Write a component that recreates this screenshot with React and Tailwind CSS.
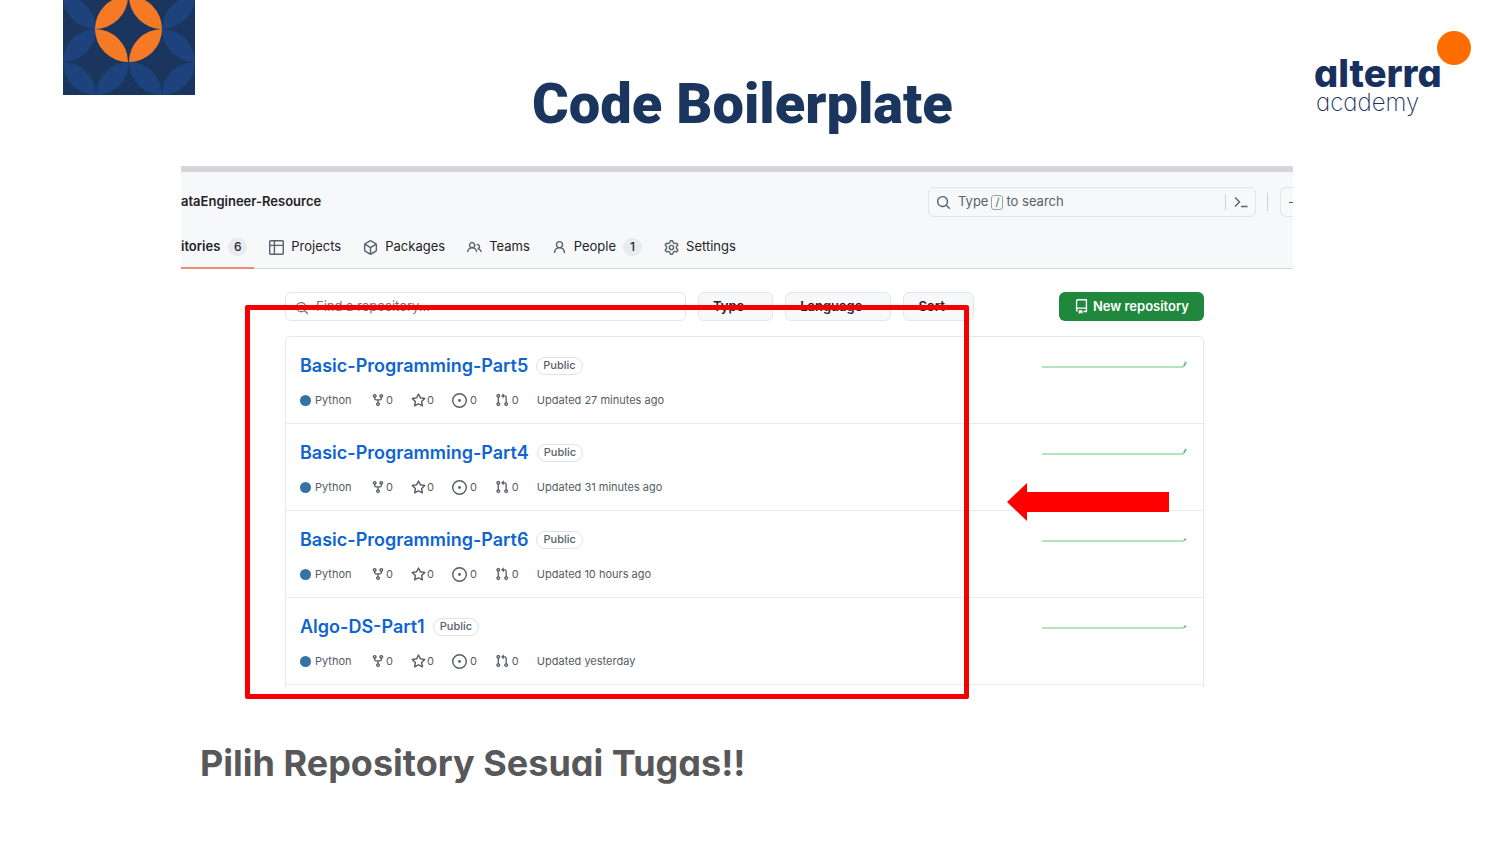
import React from "react";

const paths = {
  fork: "M5 5.372v.878c0 .414.336.75.75.75h4.5a.75.75 0 0 0 .75-.75v-.878a2.25 2.25 0 1 1 1.5 0v.878a2.25 2.25 0 0 1-2.25 2.25h-1.5v2.128a2.251 2.251 0 1 1-1.5 0V8.5h-1.5A2.25 2.25 0 0 1 3.5 6.25v-.878a2.25 2.25 0 1 1 1.5 0ZM5 3.25a.75.75 0 1 0-1.5 0 .75.75 0 0 0 1.5 0Zm6.75.75a.75.75 0 1 0 0-1.5.75.75 0 0 0 0 1.5Zm-3 8.75a.75.75 0 1 0-1.5 0 .75.75 0 0 0 1.5 0Z",
  star: "M8 .25a.75.75 0 0 1 .673.418l1.882 3.815 4.21.612a.75.75 0 0 1 .416 1.279l-3.046 2.97.719 4.192a.751.751 0 0 1-1.088.791L8 12.347l-3.766 1.98a.75.75 0 0 1-1.088-.79l.72-4.194L.818 6.374a.75.75 0 0 1 .416-1.28l4.21-.611L7.327.668A.75.75 0 0 1 8 .25Zm0 2.445L6.615 5.5a.75.75 0 0 1-.564.41l-3.097.45 2.24 2.184a.75.75 0 0 1 .216.664l-.528 3.084 2.769-1.456a.75.75 0 0 1 .698 0l2.77 1.456-.53-3.084a.75.75 0 0 1 .216-.664l2.24-2.183-3.096-.45a.75.75 0 0 1-.564-.41L8 2.694Z",
  issue: "M8 9.5a1.5 1.5 0 1 0 0-3 1.5 1.5 0 0 0 0 3ZM8 0a8 8 0 1 1 0 16A8 8 0 0 1 8 0ZM1.5 8a6.5 6.5 0 1 0 13 0 6.5 6.5 0 0 0-13 0Z",
  pull: "M1.5 3.25a2.25 2.25 0 1 1 3 2.122v5.256a2.251 2.251 0 1 1-1.5 0V5.372A2.25 2.25 0 0 1 1.5 3.25Zm5.677-.177L9.573.677A.25.25 0 0 1 10 .854V2.5h1A2.5 2.5 0 0 1 13.5 5v5.628a2.251 2.251 0 1 1-1.5 0V5a1 1 0 0 0-1-1h-1v1.646a.25.25 0 0 1-.427.177L7.177 3.427a.25.25 0 0 1 0-.354ZM3.75 2.5a.75.75 0 1 0 0 1.5.75.75 0 0 0 0-1.5Zm0 9.5a.75.75 0 1 0 0 1.5.75.75 0 0 0 0-1.5Zm8.25.75a.75.75 0 1 0 1.5 0 .75.75 0 0 0-1.5 0Z",
  table: "M0 1.75C0 .784.784 0 1.75 0h12.5C15.216 0 16 .784 16 1.75v12.5A1.75 1.75 0 0 1 14.25 16H1.75A1.75 1.75 0 0 1 0 14.25ZM6.5 6.5v8h7.75a.25.25 0 0 0 .25-.25V6.5Zm8-1.5V1.75a.25.25 0 0 0-.25-.25H6.5V5Zm-13 1.5v7.75c0 .138.112.25.25.25H5v-8ZM5 5V1.5H1.75a.25.25 0 0 0-.25.25V5Z",
  package: "m8.878.392 5.25 3.045c.54.314.872.89.872 1.514v6.098a1.75 1.75 0 0 1-.872 1.514l-5.25 3.045a1.75 1.75 0 0 1-1.756 0l-5.25-3.045A1.75 1.75 0 0 1 1 11.049V4.951c0-.624.332-1.201.872-1.514L7.122.392a1.75 1.75 0 0 1 1.756 0ZM7.875 1.69l-4.63 2.685L8 7.133l4.755-2.758-4.63-2.685a.248.248 0 0 0-.25 0ZM2.5 5.677v5.372c0 .09.047.171.125.216l4.625 2.683V8.432Zm6.25 8.271 4.625-2.683a.25.25 0 0 0 .125-.216V5.677L8.75 8.432Z",
  people: "M2 5.5a3.5 3.5 0 1 1 5.898 2.549 5.508 5.508 0 0 1 3.034 4.084.75.75 0 1 1-1.482.235 4 4 0 0 0-7.9 0 .75.75 0 0 1-1.482-.236A5.507 5.507 0 0 1 3.102 8.05 3.493 3.493 0 0 1 2 5.5ZM11 4a3.001 3.001 0 0 1 2.22 5.018 5.01 5.01 0 0 1 2.56 3.012.749.749 0 0 1-.885.954.752.752 0 0 1-.549-.514 3.507 3.507 0 0 0-2.522-2.372.75.75 0 0 1-.574-.73v-.352a.75.75 0 0 1 .416-.672A1.5 1.5 0 0 0 11 5.5.75.75 0 0 1 11 4Zm-5.5-.5a2 2 0 1 0-.001 3.999A2 2 0 0 0 5.5 3.5Z",
  person: "M10.561 8.073a6.005 6.005 0 0 1 3.432 5.142.75.75 0 1 1-1.498.07 4.5 4.5 0 0 0-8.99 0 .75.75 0 0 1-1.498-.07 6.004 6.004 0 0 1 3.431-5.142 3.999 3.999 0 1 1 5.123 0ZM10.5 5a2.5 2.5 0 1 0-5 0 2.5 2.5 0 0 0 5 0Z",
  search: "M10.68 11.74a6 6 0 0 1-7.922-8.982 6 6 0 0 1 8.982 7.922l3.04 3.04a.749.749 0 0 1-.326 1.275.749.749 0 0 1-.734-.215ZM11.5 7a4.499 4.499 0 1 0-8.997 0A4.499 4.499 0 0 0 11.5 7Z",
  gear: "M8 0a8.2 8.2 0 0 1 .701.031C9.444.095 9.99.645 10.16 1.29l.288 1.107c.018.066.079.158.212.224.231.114.454.243.668.386.123.082.233.09.299.071l1.103-.303c.644-.176 1.392.021 1.82.63.27.385.506.792.704 1.218.315.675.111 1.422-.364 1.891l-.814.806c-.049.048-.098.147-.088.294.016.257.016.515 0 .772-.01.147.038.246.088.294l.814.806c.475.469.679 1.216.364 1.891a7.977 7.977 0 0 1-.704 1.217c-.428.61-1.176.807-1.82.63l-1.102-.302c-.067-.019-.177-.011-.3.071a5.909 5.909 0 0 1-.668.386c-.133.066-.194.158-.211.224l-.29 1.106c-.168.646-.715 1.196-1.458 1.26a8.006 8.006 0 0 1-1.402 0c-.743-.064-1.289-.614-1.458-1.26l-.289-1.106c-.018-.066-.079-.158-.212-.224a5.738 5.738 0 0 1-.668-.386c-.123-.082-.233-.09-.299-.071l-1.103.303c-.644.176-1.392-.021-1.82-.63a8.12 8.12 0 0 1-.704-1.218c-.315-.675-.111-1.422.363-1.891l.815-.806c.05-.048.098-.147.088-.294a6.214 6.214 0 0 1 0-.772c.01-.147-.038-.246-.088-.294l-.815-.806C.635 6.045.431 5.298.746 4.623a7.92 7.92 0 0 1 .704-1.217c.428-.61 1.176-.807 1.82-.63l1.102.302c.067.019.177.011.3-.071.214-.143.437-.272.668-.386.133-.066.194-.158.211-.224l.29-1.106C6.009.645 6.556.095 7.299.03 7.53.01 7.764 0 8 0Zm-.571 1.525c-.036.003-.108.036-.137.146l-.289 1.105c-.147.561-.549.967-.998 1.189-.173.086-.34.183-.5.29-.417.278-.97.423-1.529.27l-1.103-.303c-.109-.03-.175.016-.195.045-.22.312-.412.644-.573.99-.014.031-.021.11.059.19l.815.806c.411.406.562.957.53 1.456a4.709 4.709 0 0 0 0 .582c.032.499-.119 1.05-.53 1.456l-.815.806c-.081.08-.073.159-.059.19.162.346.353.677.573.989.02.03.085.076.195.046l1.102-.303c.56-.153 1.113-.008 1.53.27.161.107.328.204.501.29.447.222.85.629.997 1.189l.289 1.105c.029.109.101.143.137.146a6.6 6.6 0 0 0 1.142 0c.036-.003.108-.036.137-.146l.289-1.105c.147-.561.549-.967.998-1.189.173-.086.34-.183.5-.29.417-.278.97-.423 1.529-.27l1.103.303c.109.029.175-.016.195-.045.22-.313.411-.644.573-.99.014-.031.021-.11-.059-.19l-.815-.806c-.411-.406-.562-.957-.53-1.456a4.709 4.709 0 0 0 0-.582c-.032-.499.119-1.05.53-1.456l.815-.806c.081-.08.073-.159.059-.19a6.464 6.464 0 0 0-.573-.989c-.02-.03-.085-.076-.195-.046l-1.102.303c-.56.153-1.113.008-1.53-.27a4.44 4.44 0 0 0-.501-.29c-.447-.222-.85-.629-.997-1.189l-.289-1.105c-.029-.11-.101-.143-.137-.146a6.6 6.6 0 0 0-1.142 0ZM11 8a3 3 0 1 1-6 0 3 3 0 0 1 6 0ZM9.5 8a1.5 1.5 0 1 0-3.001.001A1.5 1.5 0 0 0 9.5 8Z",
  repo: "M2 2.5A2.5 2.5 0 0 1 4.5 0h8.75a.75.75 0 0 1 .75.75v12.5a.75.75 0 0 1-.75.75h-2.5a.75.75 0 0 1 0-1.5h1.75v-2h-8a1 1 0 0 0-.714 1.7.75.75 0 1 1-1.072 1.05A2.495 2.495 0 0 1 2 11.5Zm10.5-1h-8a1 1 0 0 0-1 1v6.708A2.486 2.486 0 0 1 4.5 9h8ZM5 12.25a.25.25 0 0 1 .25-.25h3.5a.25.25 0 0 1 .25.25v3.25a.25.25 0 0 1-.4.2l-1.45-1.087a.249.249 0 0 0-.3 0L5.4 15.7a.25.25 0 0 1-.4-.2Z",
};

function Icon({ name, className }) {
  return (
    <svg viewBox="0 0 16 16" fill="currentColor" aria-hidden="true" className={`shrink-0 ${className}`}>
      <path d={paths[name]} />
    </svg>
  );
}

const leaf = (x1, y1, x2, y2) => `M${x1} ${y1}A33 33 0 0 1 ${x2} ${y2}A33 33 0 0 1 ${x1} ${y1}Z`;

function Pattern() {
  const blue = [
    [0, -4, 33, 29], [0, 62, 33, 29], [0, 62, 33, 95], [33, 95, 66, 62],
    [66, 62, 99, 95], [99, 95, 132, 62], [99, 29, 132, 62], [99, 29, 132, -4],
  ];
  const orange = [
    [32, 29, 65, 62], [66, 62, 99, 29], [32, 29, 65, -4], [66, -4, 99, 29],
  ];
  return (
    <svg viewBox="0 0 132 95" className="h-[95px] w-[132px] shrink-0" aria-hidden="true">
      <rect width="132" height="95" fill="#1a355e" />
      {blue.map((p) => <path key={p.join()} d={leaf(...p)} fill="#1e437c" />)}
      {orange.map((p) => <path key={p.join()} d={leaf(...p)} fill="#f57a25" />)}
    </svg>
  );
}

function Logo() {
  return (
    <div className="flex shrink-0 items-start pt-[31px] font-[Inter,sans-serif] text-[#18305f] [font-feature-settings:'cv11']">
      <div className="w-[123px] pt-6">
        <div className="text-[38px] leading-9 font-extrabold">alterra</div>
        <div className="pl-[2px] text-[24px] leading-6 font-extralight">academy</div>
      </div>
      <div className="size-[34px] rounded-full bg-[#ff6d00]" />
    </div>
  );
}

function Count({ value }) {
  return (
    <span className="flex h-[18px] w-[19px] items-center justify-center rounded-full bg-[#e8ebee] text-xs font-medium">
      {value}
    </span>
  );
}

function NavItem({ icon, label, count }) {
  return (
    <a href="#" className="flex items-center gap-[7px]">
      <Icon name={icon} className="size-[15px] text-[#59616a]" />
      <span>{label}</span>
      {count && <Count value={count} />}
    </a>
  );
}

function FilterButton({ label }) {
  return (
    <button className="flex h-[29px] items-center gap-1 rounded-md border border-[#e3e6e9] bg-[#f6f8fa] pr-4 pl-[14px] font-semibold">
      {label}
      <svg viewBox="0 0 8 4" className="mt-[2px] h-1 w-2" fill="currentColor" aria-hidden="true">
        <path d="M0 0h8L4 4z" />
      </svg>
    </button>
  );
}

function Stat({ icon, className, label, gap }) {
  return (
    <a href="#" aria-label={label} className={`flex items-center ${gap}`}>
      <Icon name={icon} className={className} />
      <span>0</span>
    </a>
  );
}

const repos = [
  { name: "Basic-Programming-Part5", updated: "Updated 27 minutes ago", peak: 1 },
  { name: "Basic-Programming-Part4", updated: "Updated 31 minutes ago", peak: 1 },
  { name: "Basic-Programming-Part6", updated: "Updated 10 hours ago", peak: 4 },
  { name: "Algo-DS-Part1", updated: "Updated yesterday", peak: 4 },
];

function RepoRow({ name, updated, peak }) {
  return (
    <li className="flex h-[87px] items-start justify-between border-b border-[#e9ebed] pt-4 pr-4 pl-[14px]">
      <div>
        <div className="flex h-[25px] items-center gap-2">
          <a href="#" className="text-lg leading-6 font-semibold text-[#0f65cf]">{name}</a>
          <span className="flex h-[18px] items-center rounded-full border border-[#dfe2e6] px-[6px] text-[11px] font-medium text-[#59616a]">
            Public
          </span>
        </div>
        <div className="mt-[13px] flex h-[18px] items-center text-[11px] text-[#555d66]">
          <span className="flex w-[71px] items-center gap-1">
            <span className="size-[11px] rounded-full bg-[#3572a5]" />
            Python
          </span>
          <div className="flex items-center gap-[18px]">
            <Stat icon="fork" label="Forks" className="size-[14px]" gap="gap-px" />
            <Stat icon="star" label="Stars" className="size-[15px]" gap="gap-px" />
            <Stat icon="issue" label="Issues" className="size-[15px]" gap="gap-[3px]" />
            <Stat icon="pull" label="Pull requests" className="size-[14px]" gap="gap-[3px]" />
            <span>{updated}</span>
          </div>
        </div>
      </div>
      <svg viewBox="0 0 145 8" className="mt-2 h-2 w-[145px]" fill="none" aria-hidden="true">
        <path d={`M0 6H141L144 ${peak}`} stroke="#9bdcab" strokeWidth="1.5" />
        <path d={`M142 5L144 ${peak}`} stroke="#5fb878" strokeWidth="1.5" />
      </svg>
    </li>
  );
}

export default function App() {
  return (
    <main className="min-h-screen bg-white pb-14">
      <header className="flex h-[166px] items-start pr-[29px] pl-[63px]">
        <Pattern />
        <h1 className="flex-1 pt-[72px] pr-6 text-center font-[Roboto,sans-serif] text-[56px] leading-[64px] font-black text-[#1a355e]">
          Code Boilerplate
        </h1>
        <Logo />
      </header>

      <section className="relative mr-[207px] ml-[181px] font-[Inter,sans-serif] text-[13px] text-[#1f2328]">
        <div className="h-[521px] overflow-hidden">
          <div className="border-t-[6px] border-b border-t-[#d4d6da] border-b-[#d5d9dd] bg-[#f6f8fa]">
            <div className="flex h-[60px] items-center justify-between">
              <span className="font-semibold">ataEngineer-Resource</span>
              <div className="flex items-center text-[#59616a]">
                <div className="flex h-[30px] w-[328px] items-center rounded-md border border-[#e0e3e7]">
                  <button className="flex flex-1 items-center pl-[7px]">
                    <Icon name="search" className="mr-[7px] size-[15px]" />
                    Type
                    <kbd className="mx-[3px] flex h-[15px] w-[12px] items-center justify-center rounded-[3px] border border-[#9aa1a9] font-[Inter,sans-serif] text-[11px]">/</kbd>
                    to search
                  </button>
                  <button aria-label="Command palette" className="flex h-4 w-[30px] items-center justify-center border-l border-[#cdd2d7]">
                    <svg viewBox="0 0 14 12" className="h-3 w-[14px]" fill="none" stroke="currentColor" strokeWidth="1.4" aria-hidden="true">
                      <path d="M1 1.5L5.5 6L1 10.5M7 10.5H13.5" />
                    </svg>
                  </button>
                </div>
                <div className="mr-3 ml-[11px] h-[18px] w-px bg-[#cdd2d7]" />
                <button aria-label="Create new" className="flex h-[30px] w-[13px] items-center justify-end rounded-l-md border border-r-0 border-[#e0e3e7]">
                  <span className="h-px w-1 bg-[#59616a]" />
                </button>
              </div>
            </div>
            <nav className="flex h-[36px] items-start gap-[23px]">
              <a href="#" className="-mr-2 flex h-[37px] items-start gap-2 border-b-2 border-[#f28b74] pr-[7px] font-semibold">
                <span className="flex h-[30px] items-center">itories</span>
                <span className="flex h-[30px] items-center"><Count value="6" /></span>
              </a>
              <div className="flex h-[30px] items-center gap-[22px]">
                <NavItem icon="table" label="Projects" />
                <NavItem icon="package" label="Packages" />
                <NavItem icon="people" label="Teams" />
                <NavItem icon="person" label="People" count="1" />
                <NavItem icon="gear" label="Settings" />
              </div>
            </nav>
          </div>

          <div className="pt-[23px] pr-[89px] pl-[104px]">
            <div className="flex items-center justify-between">
              <div className="flex items-center gap-3">
                <label className="flex h-[29px] w-[401px] items-center gap-[7px] rounded-md border border-[#e3e6e9] pl-[9px] text-[#6b737c]">
                  <Icon name="search" className="mt-[3px] size-[14px]" />
                  <input type="text" aria-label="Find a repository" placeholder="Find a repository..." className="min-w-0 flex-1 outline-none placeholder:text-[#6b737c]" />
                </label>
                <FilterButton label="Type" />
                <FilterButton label="Language" />
                <FilterButton label="Sort" />
              </div>
              <button className="flex h-[29px] items-center gap-1 rounded-md bg-[#1f883d] px-[15px] font-semibold text-white">
                <Icon name="repo" className="size-[15px]" />
                New repository
              </button>
            </div>
            <ul className="mt-[15px] rounded-t-md border border-b-0 border-[#e6e8eb] pb-4">
              {repos.map((r) => <RepoRow key={r.name} {...r} />)}
            </ul>
          </div>
        </div>

        <div className="pointer-events-none absolute top-[139px] left-16 h-[394px] w-[724px] rounded-xs border-[5px] border-[#f50000]" />
        <svg viewBox="0 0 162 38" className="absolute top-[317px] left-[826px] h-[38px] w-[162px]" aria-hidden="true">
          <path d="M0 19L20 0V9H162V29H20V38Z" fill="#ff0000" />
        </svg>
      </section>

      <p className="mt-[50px] ml-[200px] font-[Inter,sans-serif] text-[36px] leading-[52px] font-bold text-[#58585a] [font-feature-settings:'cv11']">
        Pilih Repository Sesuai Tugas!!
      </p>
    </main>
  );
}
